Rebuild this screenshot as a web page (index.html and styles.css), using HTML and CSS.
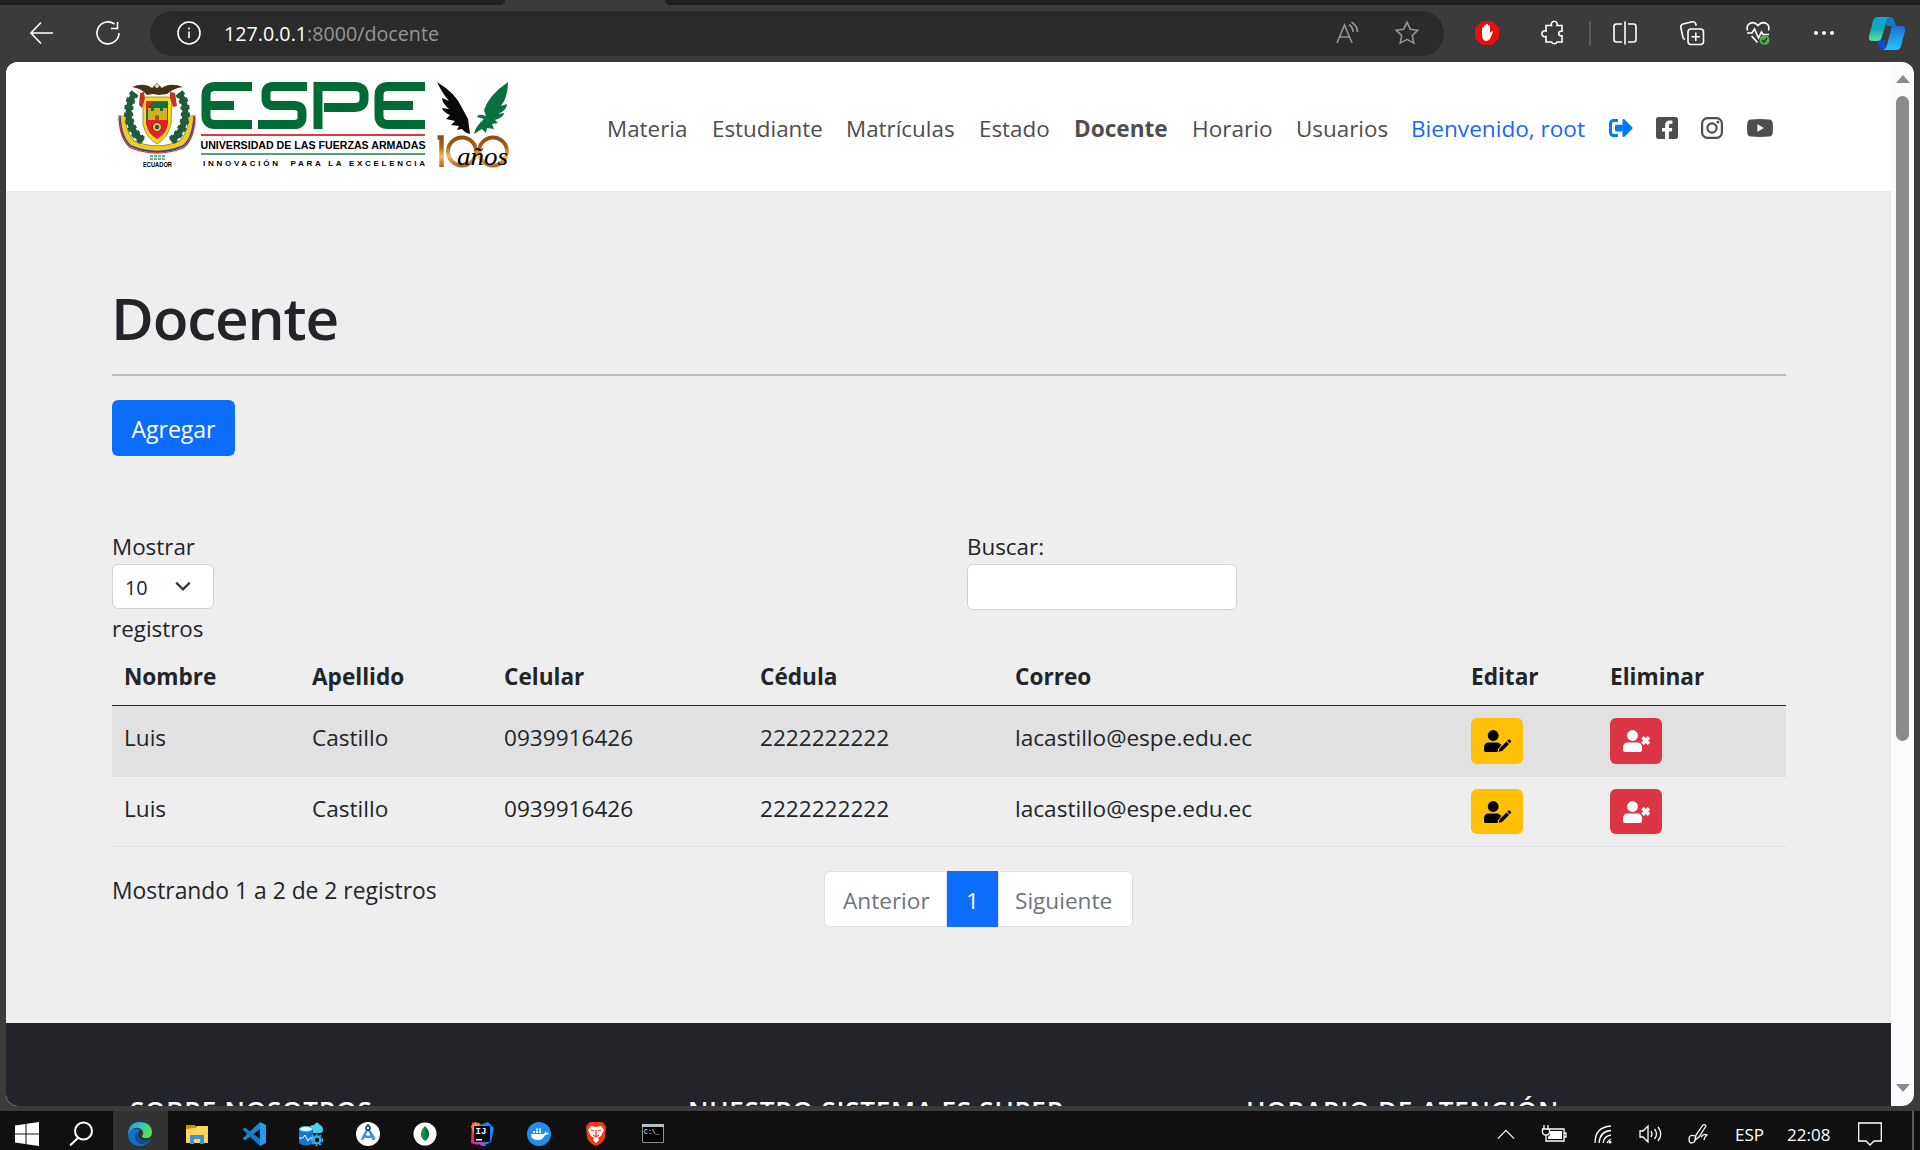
FILE: index.html
```html
<!DOCTYPE html>
<html lang="es">
<head>
<meta charset="utf-8">
<title>Docente</title>
<link rel="stylesheet" href="styles.css">
</head>
<body>
<div class="screen">
  <div class="tabstrip"><span class="tab-left"></span><span class="tab-current"></span><span class="tab-right"></span></div>
  <header class="toolbar">
    <svg class="i-back" viewBox="0 0 24 24"><path d="M23 12H1M11 1.500L1 12l10 10.500"/></svg>
    <svg class="i-reload" viewBox="0 0 24 24"><path d="M23 12a11 11 0 1 1-4.500-9M21.500 1v6.500h-6.500" /></svg>
    <div class="address">
      <svg class="i-info" viewBox="0 0 24 24"><circle cx="12" cy="12" r="11"/><path d="M12 10.500v6.500M12 6.500v2"/></svg>
      <span class="url"><b>127.0.0.1</b>:8000/docente</span>
      <svg class="i-read" viewBox="0 0 24 24"><path d="M1 22L8.500 4L16 22M3.800 16h9.400M13 3.500c2.500 1.800 4 4.500 4 7.500M15.500 1c4 2.600 6 6 6 10"/></svg>
      <svg class="i-star" viewBox="0 0 24 24"><path d="M12 1.200l3.300 7 7.500 1-5.500 5.300 1.400 7.600L12 18.400l-6.700 3.700 1.400-7.600L1.200 9.200l7.500-1z"/></svg>
    </div>
    <svg class="i-block" viewBox="0 0 24 24"><path class="red" d="M7 0h10l7 7v10l-7 7H7l-7-7V7z"/><path class="hand" d="M7 13V7q1-2 2 0V5q1-2 2 0V3.500q1-1.500 2 0V5q1-2 2 0v7l1.800-2q1.500 0 1 1.500L15 18q-2 2-4 2-4 0-4-7z"/></svg>
    <svg class="i-puzzle" viewBox="0 0 24 24"><path d="M4 4.500h5.500a3 3 0 1 1 5.500 0H20v5.700h-1a2.300 2.300 0 0 0 0 4.600h1V21h-5a3 3 0 0 1-5.500 0H4v-5.500a3 3 0 1 1 0-5.500z"/></svg>
    <span class="divider"></span>
    <svg class="i-split" viewBox="0 0 24 24"><path d="M9 3H3.500Q1 3 1 5.500v13Q1 21 3.500 21H9M15 3h5.500Q23 3 23 5.500v13q0 2.500-2.500 2.500H15M12 .5v23"/></svg>
    <svg class="i-collect" viewBox="0 0 24 24"><rect x="8" y="8" width="15.500" height="15.500" rx="3"/><path d="M15.800 11.500v8.500M11.500 15.800H20M5 18.500q-1.500-.5-2-2L.8 6.500Q.5 4 3 3L12.500.8q2.500-.3 3.200 2l.5 2"/></svg>
    <svg class="i-heart" viewBox="0 0 24 24"><path d="M1.500 9.500C-.5 3 7-1.500 12 4.500 17-1.500 24.500 3 22.500 9.500M1 12h5l2.500-4 4 9 3-6 1.500 2.500H23M5.500 15l6 6.500"/><circle class="ok" cx="18.500" cy="19" r="5"/><path class="tick" d="M16 19l2 2 3-4"/></svg>
    <svg class="i-more" viewBox="0 0 24 6"><circle cx="4" cy="3" r="2"/><circle cx="12" cy="3" r="2"/><circle cx="20" cy="3" r="2"/></svg>
    <svg class="i-copilot" viewBox="0 0 36 33"><defs><linearGradient id="ga" x2="0" y2="1"><stop stop-color="#0aa5e0"/><stop offset=".5" stop-color="#10a9b8"/><stop offset="1" stop-color="#5de196"/></linearGradient><linearGradient id="gb" x2="0" y2="1"><stop stop-color="#2468d8"/><stop offset="1" stop-color="#23c8fa"/></linearGradient></defs><path fill="#1479c4" d="M14 0h7q3 0 4 3l2 6h-9z"/><path fill="#1548d8" d="M8 23h9l-1 10q-5 0-6-4z"/><path fill="url(#ga)" d="M9 0h12q-3 1-4 5l-4 15q-1 4-5 4H4q-5 0-4-5L4 4Q5 0 9 0z"/><path fill="url(#gb)" d="M23 9h9q5 0 4 5l-4 15q-1 4-5 4H14q3-1 4-5z"/></svg>
  </header>

  <div class="viewport">
    <div class="page">
      <nav class="navbar">
        <svg class="logo" viewBox="0 0 400 96" role="img" aria-label="ESPE">
          <defs><linearGradient id="gold" gradientUnits="userSpaceOnUse" x1="0" x2="0" y1="54" y2="87"><stop stop-color="#8b4a12"/><stop offset=".35" stop-color="#a85f1c"/><stop offset=".65" stop-color="#f0bd60"/><stop offset="1" stop-color="#9c591b"/></linearGradient></defs>
          <g class="crest">
            <path d="M4 34q1 21 11 29 24 10 48 0 10-8 11-29" fill="none" stroke="#5a5320" stroke-width="7"/>
            <path d="M4 34q1 21 11 29 24 10 48 0 10-8 11-29" fill="none" stroke="#eecb25" stroke-width="6"/>
            <path d="M2 35q1 22 11 30 26 11 52 0 10-8 11-30" fill="none" stroke="#284b91" stroke-width="1.500"/>
            <path d="M1 37q1 22 12 30 26 10 52 0 11-8 12-30" fill="none" stroke="#d52835" stroke-width="1.300"/>
            <path d="M17 12Q9 22 11 38q3 14 14 22M61 12q8 10 6 26-3 14-14 22" fill="none" stroke="#1f5c3b" stroke-width="6"/>
            <path d="M17 12Q9 22 11 38q3 14 14 22M61 12q8 10 6 26-3 14-14 22" fill="none" stroke="#1f5c3b" stroke-width="9" stroke-dasharray="4 3"/>
            <path d="M27 16h24l3 3-1 24q-3 14-14 20-11-6-14-20V19z" fill="#f6dc20" stroke="#8d7d2b" stroke-width=".8"/>
            <path d="M28 20h22v20H28z" fill="#14713c"/><path d="M28 39h22v4q-2 10-11 15-9-5-11-15zM28 20h8l-8 9z" fill="#e51e2b"/>
            <path d="M30 39V27h3v3h3v-3h6v3h3v-3h4v12z" fill="#d5ae1e"/><path d="M37 39v-4q2-2 4 0v4z" fill="#846313"/>
            <circle cx="39" cy="46" r="4.500" fill="#f4ca22" stroke="#222" stroke-width=".7"/><circle cx="39" cy="46" r="2.200" fill="#25468d"/>
            <path d="M22 12l4-1 1 6-3 10-3-3zM52 11l5 1 2 13-4 1-3-9z" fill="#bd3428"/>
            <path d="M14 6q12-5 20 1l5-5 5 5q8-6 21-1-9 1-16 7l-8 1-6-1-6 1Q23 7 14 6z" fill="#463018"/><circle cx="39" cy="5" r="2" fill="#ddd"/>
            <path d="M32 75h16M32 78h16" stroke="#3b936b" stroke-width="1.500" stroke-dasharray="3 1"/>
            <text x="25" y="85.500" textLength="29" lengthAdjust="spacingAndGlyphs" font-size="6.500">ECUADOR</text>
          </g>
          <g fill="none" stroke="#006b37" stroke-width="9">
            <path d="M134 5.500H97q-9 0-9 9v20q0 9 9 9h37M88 24.500h28"/>
            <path d="M189 5.500h-34q-7 0-7 7v5q0 7 7 7h21q8 0 8 7v5q0 7-8 7h-36"/>
            <path d="M200 48V5.500h36q10 0 10 8v5q0 8-10 8h-30"/>
            <path d="M307 5.500h-37q-9 0-9 9v20q0 9 9 9h37M261 24.500h34"/>
          </g>
          <path d="M83 54h224" stroke="#e43544" stroke-width="2"/><path d="M83 73h224" stroke="#287d50" stroke-width="1.500"/>
          <text x="82.500" y="68" textLength="225" lengthAdjust="spacingAndGlyphs" font-size="10.500">UNIVERSIDAD DE LAS FUERZAS ARMADAS</text>
          <text x="85" y="85" textLength="222" font-size="8">INNOVACIÓN &#160;PARA LA EXCELENCIA</text>
          <path fill="#090909" d="M319 1q18 11 24 24l7 13 2 15q-5-1-8-5l-5 1 2-4-8-1 4-4-9-2 4-4q-7-3-8-7l7 1q-7-6-7-11l7 3q-7-8-12-19z"/>
          <path fill="#08713f" d="M390 1q-19 13-24 28l2 6q-8-3-9 1l7 2q-9 8-10 15l8-5 4 4 1-5 7 1-2-5 6-1-3-3q9-3 9-7l-6 1q9-4 9-10l-6 2q7-9 7-24z"/>
          <path d="M319.500 56.500h4V86" fill="none" stroke="url(#gold)" stroke-width="4.500"/>
          <g fill="none" stroke="url(#gold)" stroke-width="4"><circle cx="344" cy="70.500" r="14"/><circle cx="375" cy="70.500" r="14"/></g>
          <text class="script" x="339" y="84" textLength="51" lengthAdjust="spacingAndGlyphs" font-size="25">años</text>
        </svg>
        <div class="links">
          <a class="n1">Materia</a><a class="n2">Estudiante</a><a class="n3">Matrículas</a><a class="n4">Estado</a><a class="n5 active">Docente</a><a class="n6">Horario</a><a class="n7">Usuarios</a><a class="n8 user">Bienvenido, root</a>
          <svg class="i-exit" viewBox="0 64 512 384"><path d="M497 273L329 441c-15 15-41 4.500-41-17v-96H152c-13.300 0-24-10.700-24-24v-96c0-13.300 10.700-24 24-24h136V88c0-21.400 25.900-32 41-17l168 168c9.300 9.400 9.300 24.600 0 34zM192 436v-40c0-6.600-5.400-12-12-12H96c-17.700 0-32-14.300-32-32V160c0-17.700 14.300-32 32-32h84c6.600 0 12-5.400 12-12V76c0-6.600-5.400-12-12-12H96c-53 0-96 43-96 96v192c0 53 43 96 96 96h84c6.600 0 12-5.400 12-12z"/></svg>
          <svg class="i-fb" viewBox="0 32 448 448"><path d="M400 32H48A48 48 0 0 0 0 80v352a48 48 0 0 0 48 48h137.250V327.690h-63V256h63v-54.640c0-62.150 37-96.480 93.670-96.480 27.140 0 55.520 4.840 55.520 4.840v61h-31.270c-30.810 0-40.420 19.120-40.420 38.730V256h68.780l-11 71.690h-57.780V480H400a48 48 0 0 0 48-48V80a48 48 0 0 0-48-48z"/></svg>
          <svg class="i-ig" viewBox="0 0 22 22"><rect x="1.100" y="1.100" width="19.800" height="19.800" rx="5.500"/><circle cx="11" cy="11" r="4.600"/><circle class="dot" cx="16.900" cy="5.200" r="1.400"/></svg>
          <svg class="i-yt" viewBox="0 0 26 18"><path fill-rule="evenodd" d="M4 .4Q13-.4 22 .4q3.400.3 3.700 3.600.6 5 0 10-.3 3.300-3.700 3.600-9 .8-18 0Q.6 17.300.3 14q-.6-5 0-10Q.6.700 4 .4zM10.400 5.200v7.600L17 9z"/></svg>
        </div>
      </nav>
      <main>
        <h1>Docente</h1>
        <hr>
        <button class="add">Agregar</button>
        <div class="filters">
          <div class="length"><label>Mostrar</label><div class="select">10<svg viewBox="0 0 16 16"><path d="M2 5l6 6 6-6"/></svg></div><label>registros</label></div>
          <div class="search"><label>Buscar:</label><div class="input"></div></div>
        </div>
        <table>
          <colgroup><col class="c1"><col class="c2"><col class="c3"><col class="c4"><col class="c5"><col class="c6"><col class="c7"></colgroup>
          <thead><tr><th>Nombre</th><th>Apellido</th><th>Celular</th><th>Cédula</th><th>Correo</th><th>Editar</th><th>Eliminar</th></tr></thead>
          <tbody>
            <tr class="odd"><td>Luis</td><td>Castillo</td><td>0939916426</td><td>2222222222</td><td>lacastillo@espe.edu.ec</td>
              <td><button class="act edit"><svg viewBox="0 0 27 22"><circle cx="9.200" cy="5.500" r="5.400"/><path d="M5 12.500h9l3.500 2.500-3.500 4-.5 3H1.500Q0 22 0 20v-2.500q0-5 5-5z"/><path d="M15.500 18.500l7-7 2.500 2.500-7 7-3.300.8zM23.300 10.700l1-1q.8-.7 1.500 0l1 1q.7.800 0 1.500l-1 1z"/></svg></button></td>
              <td><button class="act del"><svg viewBox="0 0 27 22"><circle cx="9.500" cy="5.500" r="5.400"/><path d="M5 12.500h9q5 0 5 5V20q0 2-2 2H2q-2 0-2-2v-2.500q0-5 5-5z"/><path class="x" d="M19.500 7.200l6.500 6.500M26 7.200l-6.500 6.500"/></svg></button></td></tr>
            <tr><td>Luis</td><td>Castillo</td><td>0939916426</td><td>2222222222</td><td>lacastillo@espe.edu.ec</td>
              <td><button class="act edit"><svg viewBox="0 0 27 22"><circle cx="9.200" cy="5.500" r="5.400"/><path d="M5 12.500h9l3.500 2.500-3.500 4-.5 3H1.500Q0 22 0 20v-2.500q0-5 5-5z"/><path d="M15.500 18.500l7-7 2.500 2.500-7 7-3.300.8zM23.300 10.700l1-1q.8-.7 1.500 0l1 1q.7.800 0 1.500l-1 1z"/></svg></button></td>
              <td><button class="act del"><svg viewBox="0 0 27 22"><circle cx="9.500" cy="5.500" r="5.400"/><path d="M5 12.500h9q5 0 5 5V20q0 2-2 2H2q-2 0-2-2v-2.500q0-5 5-5z"/><path class="x" d="M19.500 7.200l6.500 6.500M26 7.200l-6.500 6.500"/></svg></button></td></tr>
          </tbody>
        </table>
        <div class="table-foot">
          <span class="info">Mostrando 1 a 2 de 2 registros</span>
          <div class="pager"><a class="prev">Anterior</a><a class="current">1</a><a class="next">Siguiente</a></div>
        </div>
      </main>
      <footer><h4 class="f1">SOBRE NOSOTROS</h4><h4 class="f2">NUESTRO SISTEMA ES SUPER</h4><h4 class="f3">HORARIO DE ATENCIÓN</h4></footer>
    </div>
    <div class="scrollbar"><span class="up"></span><span class="thumb"></span><span class="down"></span></div>
  </div>

  <div class="taskbar">
    <div class="apps">
      <span class="app"><svg viewBox="0 0 24 24"><path fill="#fff" d="M0 3.400L10.500 2v9.500H0zM11.500 1.800L24 0v11.500H11.500zM0 12.500h10.500V22L0 20.600zM11.500 12.500H24V24l-12.500-1.800z"/></svg></span>
      <span class="app"><svg viewBox="0 0 24 24" fill="none" stroke="#fff" stroke-width="2"><circle cx="14.500" cy="9" r="8.500"/><path d="M9 16L1 23.500"/></svg></span>
      <span class="app on"><svg viewBox="0 0 24 24"><defs><linearGradient id="e1" x2="1" y2=".4"><stop stop-color="#1c9bdc"/><stop offset=".5" stop-color="#30c3cf"/><stop offset="1" stop-color="#5be04d"/></linearGradient></defs><path fill="#1171cb" d="M1 9Q6 5 12 8q-4 4-1 8 4 5 12 1.500Q18 25 10 24 0 22 0 12z"/><path fill="url(#e1)" d="M0 12Q1 0 12 0q11 0 12 10 0 6-6 6-4 0-4-2 2-2 1-4-2-5-8-4-5 1-7 6z"/><path fill="#104b98" d="M9 10q-4 5 0 10 4 4 9 1 4-2 5-4-7 3-11 0-4-3-3-7z"/></svg></span>
      <span class="app"><svg viewBox="0 0 24 24"><path fill="#d58c00" d="M1 3h9l2 3v3H1z"/><path fill="#ffd45c" d="M1 7l9-1 2-2h11v17H1z"/><path fill="#3a93dc" d="M5 13h14v9h-4v-5H9v5H5z"/></svg></span>
      <span class="app"><svg viewBox="0 0 24 24"><path fill="#1389d4" d="M18 0v7L3 18.500l-2.500-2z"/><path fill="#0f7ccc" d="M3 5.500L18 17v7L.5 7.500z"/><path fill="#229ce8" d="M18 0l6 3v18l-6 3z"/></svg></span>
      <span class="app"><svg viewBox="0 0 24 24"><path fill="#49cfe9" d="M10 8q0-5 5-5 3-5 6 0 3 1 3 5 0 3-3 3H11z"/><path fill="#1478cb" d="M0 7v14q7 5 14 0V7z"/><ellipse cx="7" cy="7" rx="6.500" ry="2.500" fill="#e7faff" stroke="#35bce5"/><path d="M0 16h4l2-3 3 6 2-3h3" stroke="#fff" fill="none"/><circle cx="18" cy="18" r="3.500" fill="#111" stroke="#32b6e7" stroke-width="2.500"/><circle cx="18" cy="18" r="5.500" fill="none" stroke="#32b6e7" stroke-width="1.500" stroke-dasharray="2 2"/></svg></span>
      <span class="app"><svg viewBox="0 0 24 24"><circle cx="12" cy="12" r="12" fill="#fff"/><path d="M14 8l6 8-4 2z" fill="#67d995"/><path d="M11.500 7L6 18M12.500 7L18 18M7 13q5 4 10 0" fill="none" stroke="#4289f4" stroke-width="2.500"/><circle cx="12" cy="6" r="2" fill="#fff" stroke="#173447" stroke-width="1.500"/><path d="M12 2v2" stroke="#173447" stroke-width="1.500"/></svg></span>
      <span class="app"><svg viewBox="0 0 24 24"><circle cx="12" cy="12" r="11.500" fill="#fff"/><path d="M12 4q-5 5-4 10 1 3 4 5z" fill="#12924f"/><path d="M12 4q5 5 4 10-1 3-4 5z" fill="#0a6b3b"/></svg></span>
      <span class="app"><svg viewBox="0 0 24 24"><path fill="#f52770" d="M2 0l8 4-2 19-7-2z"/><path fill="#ff8a2a" d="M1 4l4-4 6 2-8 9z"/><path fill="#1689f5" d="M10 3l8-3 6 6-3 14-8 4z"/><path fill="#b44bdc" d="M2 18l10 6h4l-8-9z"/><path fill="#080808" d="M4 4h16v16H4z"/><text x="5.500" y="12" fill="#fff" font-family="Liberation Mono" font-weight="bold" font-size="9">IJ</text><path fill="#fff" d="M6 17h6v1.500H6z"/></svg></span>
      <span class="app"><svg viewBox="0 0 24 24"><circle cx="12" cy="12" r="12" fill="#218fe9"/><path fill="#fff" d="M4 12h12q2 0 2-3 1 1 1 2 2-1 3 0-1 2-4 2-2 5-7 5-7 0-7-6zM6 9h2v2H6zM9 9h2v2H9zM12 9h2v2h-2zM9 6.500h2v2H9zM12 6.500h2v2h-2z"/></svg></span>
      <span class="app"><svg viewBox="0 0 24 24"><path fill="#f23b16" d="M6 0h12l4 4-1 12q-2 5-9 8-7-3-9-8L2 4z"/><path fill="#fff" d="M7 4l5 1 5-1 3 4-3 6-3 2 1 2-3 3-3-3 1-2-3-2-3-6z"/><path d="M7 8l3 1M17 8l-3 1M12 8v6M9 13l3 2 3-2" stroke="#f23b16" stroke-width="1.300" fill="none"/></svg></span>
      <span class="app"><svg viewBox="0 0 24 24"><path fill="#000" stroke="#8b8e93" d="M1.500 2.500h21v18h-21z"/><path fill="#b8bdc5" d="M1 2h22v3H1z"/><text x="3" y="12" fill="#fff" font-family="Liberation Mono" font-size="6.500">C:\_</text></svg></span>
    </div>
    <div class="tray">
      <svg class="t1" viewBox="0 0 20 11"><path d="M1 10l9-9 9 9"/></svg>
      <svg class="t2" viewBox="0 0 24 18"><path d="M7 4h15v12H4v-6M22 8h2v4h-2M2 0v4M6 0v4M.5 4h7v3q0 3-3.500 3T.5 7z"/><path class="solid" d="M8 6h12v8H6v-2l2-2z"/></svg>
      <svg class="t3" viewBox="0 0 18 19"><path d="M1 18Q1 2 17 1M5 18Q6 6 17 5.500M9 18q1-7 8-8M13 18q1-3 4-4"/><circle class="solid" cx="16" cy="17" r="1.500"/></svg>
      <svg class="t4" viewBox="0 0 23 18"><path d="M1 6v6h3l5 5V1L4 6zM12 6q2 3 0 6M15.500 4q4 5 0 10M19 2q5.500 7 0 14"/></svg>
      <svg class="t5" viewBox="0 0 20 20"><path d="M7 16L8 11 15 1q2-1 3 1L11 13zM7 12q-6-2-6 3 0 6 5 3l2-3M13 13q3-4 6-2-2 1-3 5"/></svg>
      <span class="lang">ESP</span><span class="clock">22:08</span>
      <svg class="t6" viewBox="0 0 24 24"><path d="M.7 1h22.600v18H16l-4 4-4-4H.7z"/></svg>
      <span class="peek"></span>
    </div>
  </div>
</div>
</body>
</html>
```
FILE: styles.css
```css
* { box-sizing: border-box; }
body { margin: 0; overflow: hidden; font-family: "Open Sans", "Noto Sans", sans-serif; font-size: 22.600px; color: #212529; }
svg { display: block; flex: none; overflow: visible; }
h1, h4, hr { margin: 0; }
a, label, .url, .info, .lang, .clock { white-space: nowrap; }
.screen { width: 1920px; height: 1150px; background: #3b3b3b; display: flex; flex-direction: column; overflow: hidden; }

/* Browser chrome */
.tabstrip { display: flex; height: 5px; flex: none; }
.tab-left { width: 505px; background: #202020; border-bottom-right-radius: 5px; }
.tab-current { width: 160px; }
.tab-right { flex: 1; background: #202020; border-bottom-left-radius: 5px; }
.toolbar { height: 57px; flex: none; display: flex; align-items: center; padding: 0 0 1px 30px; }
.toolbar svg { width: 24px; height: 24px; fill: none; stroke: #fff; stroke-width: 1.600; }
.i-reload { margin-left: 42px; }
.address { width: 1294px; height: 45px; margin-left: 30px; border-radius: 23px; background: #2b2b2b; display: flex; align-items: center; padding-left: 27px; }
.url { font-size: 19.700px; color: #969696; margin-left: 23px; width: 1112px; }
.url b { font-weight: 400; color: #fff; }
.toolbar .i-read, .toolbar .i-star { stroke: #969696; }
.i-star { margin-left: 35px; }
.toolbar .i-block { margin-left: 31px; stroke: none; }
.red { fill: #e60f0b; }
.hand { fill: #fff; }
.i-puzzle { margin-left: 43px; }
.divider { width: 2px; height: 24px; background: #5c5c5c; margin-left: 23px; }
.i-split { margin-left: 22px; }
.i-collect { margin-left: 43px; }
.i-heart { margin-left: 42px; }
.toolbar .ok { fill: #4caf50; stroke: none; }
.toolbar .tick { stroke: #193a1d; stroke-width: 1.500; }
.toolbar .i-more { margin-left: 42px; height: 6px; fill: #fff; stroke: none; }
.toolbar .i-copilot { width: 36px; height: 33px; stroke: none; margin-left: 33px; }

.viewport { width: 1908px; height: 1044px; flex: none; margin-left: 6px; border-radius: 12px; overflow: hidden; display: flex; background: #fcfcfc; }
.page { width: 1885px; flex: none; background: #eee; }
.scrollbar { width: 23px; display: flex; flex-direction: column; align-items: center; }
.up { border: 7px solid transparent; border-bottom: 8px solid #8b8b8b; border-top: 0; margin-top: 13px; }
.thumb { width: 13px; height: 645px; border-radius: 7px; background: #8b8b8b; margin-top: 13px; }
.down { border: 7px solid transparent; border-top: 8px solid #8b8b8b; border-bottom: 0; margin-top: 343px; }

/* Site navigation */
.navbar { height: 129px; background: #fff; display: flex; padding: 19px 0 0 112px; }
.logo { width: 400px; height: 96px; font-family: "Liberation Sans", Arial, sans-serif; font-weight: 700; }
.logo .script { font-family: "Liberation Serif", serif; font-style: italic; font-weight: 400; }
.links { height: 95px; display: flex; align-items: center; margin-left: 89px; color: #4e4e4e; }
.links a { flex: none; }
.n1 { width: 105px; } .n2 { width: 134px; } .n3 { width: 133px; } .n4 { width: 95px; }
.n5 { width: 118px; } .n6 { width: 104px; } .n7 { width: 115px; } .n8 { width: 198px; }
.n1, .n2, .n3, .n4, .n7 { font-size: 22.400px; }
.active { font-weight: 700; }
.user { color: #1768f5; }
.links svg { margin-bottom: 1px; }
.i-exit { width: 24px; height: 18px; fill: #007bff; }
.i-fb { width: 22px; height: 22px; fill: #4e4e4e; margin-left: 23px; }
.i-ig { width: 22px; height: 22px; fill: none; stroke: #4e4e4e; stroke-width: 2.200; margin-left: 23px; }
.i-ig .dot { fill: #4e4e4e; stroke: none; }
.i-yt { width: 26px; height: 22px; fill: #4e4e4e; margin-left: 24px; }

/* Content */
main { height: 832px; padding: 90px 105px 0 106px; }
h1 { font-size: 58.500px; line-height: 72px; font-weight: 600; letter-spacing: -1.200px; margin-left: -1px; }
hr { border: 0; height: 2px; background: #bbb; margin-top: 21px; }
button { border: 0; font: inherit; display: block; }
.add { width: 123px; height: 56px; margin-top: 24px; padding: 2px 0 0; border-radius: 6px; background: #0d6efd; color: #fff; font-size: 23px; }
.filters { display: flex; margin-top: 73px; height: 117px; }
.filters label { display: block; line-height: 35px; font-size: 22.400px; }
.length { width: 855px; }
.select { width: 102px; height: 45px; border: 1.500px solid #ced4da; border-radius: 6px; background: #fff; display: flex; align-items: center; padding: 1px 0 0 12px; font-size: 19.800px; }
.select svg { width: 18px; height: 18px; fill: none; stroke: #343a40; stroke-width: 2; margin: -3px 0 0 26px; }
.length label:last-child { padding-top: 2px; }
.input { width: 270px; height: 46px; border: 1.500px solid #ced4da; border-radius: 6px; background: #fff; }
table { width: 1674px; table-layout: fixed; border-collapse: separate; border-spacing: 0; }
.c1 { width: 188px; } .c2 { width: 192px; } .c3 { width: 256px; } .c4 { width: 255px; }
.c5 { width: 456px; } .c6 { width: 139px; } .c7 { width: 188px; }
th { height: 60px; padding: 2px 12px 0; text-align: left; font-weight: 700; border-bottom: 1.500px solid #212529; }
td { height: 71px; padding: 14px 12px 0; vertical-align: top; line-height: 36px; border-bottom: 1px solid #dee2e6; }
tbody tr:last-child td { height: 70px; }
.odd td { background: #e1e1e1; }
.act { width: 52px; height: 46px; border-radius: 6px; display: flex; padding: 12px 0 0 13px; margin-top: -2px; }
tr:last-child .act { height: 45px; }
.act svg { width: 27px; height: 22px; }
.edit { background: #ffc107; }
.del { background: #dc3545; fill: #fff; }
.x { stroke: #fff; stroke-width: 3.600; }
.table-foot { display: flex; margin-top: 24px; }
.info { width: 712px; padding-top: 4px; font-size: 22.850px; }
.pager { display: flex; height: 56px; color: #6c757d; }
.pager a { display: flex; align-items: center; padding: 2px 0 0 18px; background: #fff; border: 1.500px solid #dee2e6; }
.prev { width: 123px; border-radius: 6px 0 0 6px; }
.pager .current { width: 51px; background: #0d6efd; border-color: #0d6efd; color: #fff; padding-left: 18px; }
.pager .next { width: 135px; border-radius: 0 6px 6px 0; padding-left: 16px; }
footer { height: 83px; background: #23242a; color: #fff; display: flex; padding: 71px 0 0 124px; overflow: hidden; }
footer h4 { font-size: 26px; line-height: 33px; letter-spacing: .8px; white-space: nowrap; flex: none; font-weight: 600; }
.f1, .f2 { width: 558px; }

/* Taskbar */
.taskbar { height: 39px; margin-top: 5px; flex: none; background: #101010; display: flex; justify-content: space-between; color: #fff; }
.apps { display: flex; }
.app { width: 57px; display: flex; justify-content: center; align-items: center; padding-top: 6px; }
.app:nth-child(1) { width: 54px; }
.app:nth-child(2) { width: 59px; padding-right: 5px; }
.app svg { width: 24px; height: 24px; }
.app.on { width: 55px; background: #333; padding-right: 1px; }
.tray { display: flex; align-items: center; padding-top: 7px; font-size: 17px; }
.tray svg { fill: none; stroke: #fff; stroke-width: 1.300; }
.tray .solid { fill: #fff; stroke: none; }
.t1 { width: 18px; height: 11px; margin-right: 27px; }
.t2 { width: 24px; height: 18px; margin-right: 28px; }
.t3 { width: 18px; height: 19px; margin-right: 27px; }
.t4 { width: 23px; height: 18px; margin-right: 26px; }
.t5 { width: 20px; height: 20px; margin-right: 27px; }
.lang { width: 52px; }
.clock { width: 71px; }
.t6 { width: 24px; height: 24px; }
.peek { width: 2px; height: 39px; background: #5a5a5a; margin: -7px 6px 0 30px; }
```
